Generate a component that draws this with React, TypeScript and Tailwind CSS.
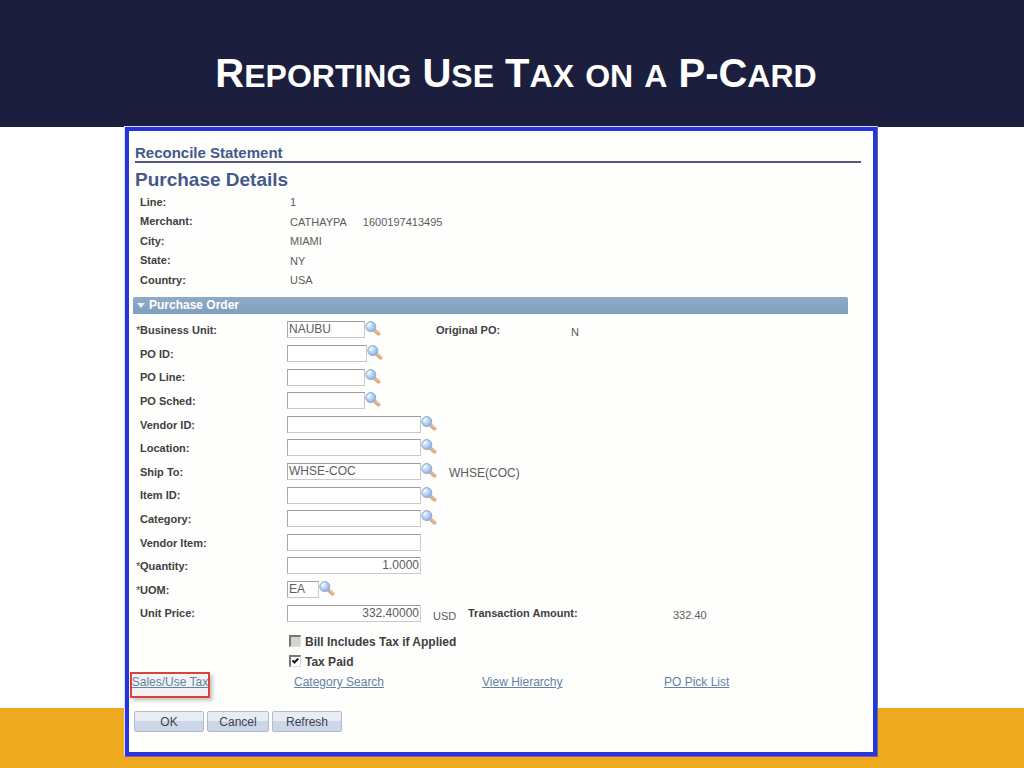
import React from "react";

interface FieldProps {
  id: string;
  label: string;
  required?: boolean;
  value?: string;
  width?: string;
  lookup?: boolean;
  children?: React.ReactNode;
}

const details = [
  { label: "Line:", values: ["1"] },
  { label: "Merchant:", values: ["CATHAYPA", "1600197413495"] },
  { label: "City:", values: ["MIAMI"] },
  { label: "State:", values: ["NY"] },
  { label: "Country:", values: ["USA"] },
];

const LookupIcon: React.FC = () => (
  <svg viewBox="0 0 16 16" className="h-4 w-4" aria-hidden="true">
    <defs>
      <radialGradient id="lens" cx="0.35" cy="0.35" r="0.75">
        <stop offset="0" stopColor="#e6f6ff" />
        <stop offset="0.55" stopColor="#a9cff6" />
        <stop offset="1" stopColor="#7da7e6" />
      </radialGradient>
    </defs>
    <path d="M9.6 9.2 13.8 12.9" stroke="#e2b98c" strokeWidth="3.6" strokeLinecap="round" />
    <path d="M9.6 10.8 13 13.9" stroke="#b99a80" strokeWidth="1" strokeLinecap="round" />
    <circle cx="5.8" cy="5.6" r="5" fill="url(#lens)" stroke="#98a9c0" strokeWidth="1" />
    <path d="M2.8 5.2A3.2 3.2 0 0 1 5.6 2.4" fill="none" stroke="#fff" strokeWidth="1" strokeLinecap="round" />
  </svg>
);

const Field: React.FC<FieldProps> = ({ id, label, required, value = "", width = "w-[134px]", lookup, children }) => (
  <div className="flex items-center">
    <label htmlFor={id} className="flex w-[151px] shrink-0 pt-px text-[11px] font-bold">
      <span className="w-1 font-normal">{required ? "*" : ""}</span>
      {label}
    </label>
    <input
      id={id}
      type="text"
      defaultValue={value}
      className={`h-[17px] border border-[#c9c9c9] border-t-[#9d9d9d] border-l-[#ababab] bg-white px-px pb-px text-xs leading-4 text-[#5c5c5c] outline-none ${width}`}
    />
    {lookup && (
      <button type="button" aria-label={`Look up ${label}`} className="shrink-0 pb-px">
        <LookupIcon />
      </button>
    )}
    {children}
  </div>
);

const CheckField: React.FC<{ id: string; label: string; checked?: boolean; disabled?: boolean }> = ({
  id,
  label,
  checked,
  disabled,
}) => (
  <div className="flex h-5 items-center">
    <span className="relative mr-1 h-3 w-3">
      <input
        id={id}
        type="checkbox"
        defaultChecked={checked}
        disabled={disabled}
        className="peer block h-3 w-3 appearance-none border-t-2 border-r border-b border-l-2 border-[#dedede] border-t-[#777] border-l-[#777] bg-white disabled:bg-[#d6d3ce]"
      />
      <svg viewBox="0 0 12 12" className="pointer-events-none absolute inset-0 hidden h-3 w-3 peer-checked:block">
        <path d="M3.5 5.3 5.5 7.5 9.2 3.6" fill="none" stroke="#111" strokeWidth="2" />
      </svg>
    </span>
    <label htmlFor={id} className="pt-0.5 text-xs font-bold">
      {label}
    </label>
  </div>
);

const ActionButton: React.FC<{ children: React.ReactNode; width: string }> = ({ children, width }) => (
  <button
    type="button"
    className={`h-[21px] rounded-[2px] border border-[#b3bac9] bg-linear-to-b from-[#e8edf5] from-50% to-[#ccd6e6] to-50% text-xs leading-4 text-[#3c4250] ${width}`}
  >
    {children}
  </button>
);

const linkClass = "text-xs leading-4 text-[#6283a3] underline";

const App: React.FC = () => {
  return (
    <div className="min-h-screen bg-white font-['Liberation_Sans',Arial,sans-serif] text-[#3f3f3f]">
      <header className="h-[127px] bg-[#1b1e3d] pt-[49px] pl-2">
        <h1 className="text-center text-[40px] leading-[48px] font-bold text-white">
          R<span className="text-[32px]">EPORTING</span> U<span className="text-[32px]">SE</span> T
          <span className="text-[32px]">AX</span> <span className="text-[32px]">ON</span>{" "}
          <span className="text-[32px]">A</span> P-C<span className="text-[32px]">ARD</span>
        </h1>
      </header>

      <main className="relative z-10 -mt-px ml-31 max-w-[754px] border border-[#dcdcfa] border-r-[#60708c] border-b-[#b23fae]">
        <div className="border-4 border-[#2736dc] bg-[#fefefd] px-1 pt-3.5 pb-5">
          {/* Page titles */}
          <h2 className="mr-2 ml-0.5 border-b-2 border-[#55567f] text-[15px] leading-4 font-bold text-[#44598a]">
            Reconcile Statement
          </h2>
          <h3 className="mt-[5px] ml-0.5 text-[19px] leading-6 font-bold text-[#44598a]">Purchase Details</h3>

          <dl className="grid min-h-[98px] auto-rows-fr pl-[7px] text-[11px]">
            {details.map((d) => (
              <div key={d.label} className="flex items-center">
                <dt className="w-[150px] font-bold">{d.label}</dt>
                <dd className="flex gap-4 pt-px text-[#5c5c5c]">
                  {d.values.map((v) => (
                    <span key={v}>{v}</span>
                  ))}
                </dd>
              </div>
            ))}
          </dl>

          {/* Section bar */}
          <div className="mt-[7px] mr-[21px] rounded-t-[2px] bg-linear-to-b from-[#8faac6] to-[#7f9fc0]">
            <button type="button" className="flex h-[17px] items-center pb-px pl-1 text-xs font-bold text-white">
              <svg viewBox="0 0 8 5" className="mr-1 h-[5px] w-2" aria-hidden="true">
                <path d="M0 0h8L4 5z" fill="#e4eef6" />
              </svg>
              Purchase Order
            </button>
          </div>

          <form onSubmit={(e) => e.preventDefault()}>
            <div className="mt-1 grid min-h-[307px] auto-rows-fr pl-[3px]">
              <Field id="business-unit" label="Business Unit:" required value="NAUBU" width="w-[78px]" lookup>
                <span className="ml-[55px] w-[135px] pt-px text-[11px] font-bold">Original PO:</span>
                <span className="pt-1 text-[11px] text-[#5c5c5c]">N</span>
              </Field>
              <Field id="po-id" label="PO ID:" width="w-20" lookup />
              <Field id="po-line" label="PO Line:" width="w-[78px]" lookup />
              <Field id="po-sched" label="PO Sched:" width="w-[78px]" lookup />
              <Field id="vendor-id" label="Vendor ID:" lookup />
              <Field id="location" label="Location:" lookup />
              <Field id="ship-to" label="Ship To:" value="WHSE-COC" lookup>
                <span className="ml-3 pt-1 text-xs text-[#5c5c5c]">WHSE(COC)</span>
              </Field>
              <Field id="item-id" label="Item ID:" lookup />
              <Field id="category" label="Category:" lookup />
              <Field id="vendor-item" label="Vendor Item:" />
              <Field id="quantity" label="Quantity:" required value="1.0000" width="w-[134px] text-right" />
              <Field id="uom" label="UOM:" required value="EA" width="w-8" lookup />
              <Field id="unit-price" label="Unit Price:" value="332.40000" width="w-[134px] text-right">
                <span className="ml-3 w-[35px] pt-1.5 text-[11px] text-[#5c5c5c]">USD</span>
                <span className="w-[205px] pt-px text-[11px] font-bold">Transaction Amount:</span>
                <span className="pt-1 text-[11px] text-[#5c5c5c]">332.40</span>
              </Field>
            </div>

            <div className="mt-1.5 pl-[156px]">
              <CheckField id="bill-includes-tax" label="Bill Includes Tax if Applied" disabled />
              <CheckField id="tax-paid" label="Tax Paid" checked />
            </div>

            {/* Related pages */}
            <nav className="mt-px grid grid-cols-[161px_188px_182px_auto] items-start">
              <div className="-ml-[3px] flex h-[26px] w-20 justify-center border-2 border-[#d8433c] bg-[#f3f3f6] shadow-[3px_3px_3px_#cccccc]">
                <a href="#sales-use-tax" className={`whitespace-nowrap ${linkClass}`}>Sales/Use Tax</a>
              </div>
              <a href="#category-search" className={`pt-0.5 ${linkClass}`}>Category Search</a>
              <a href="#view-hierarchy" className={`pt-0.5 ${linkClass}`}>View Hierarchy</a>
              <a href="#po-pick-list" className={`pt-0.5 ${linkClass}`}>PO Pick List</a>
            </nav>

            <div className="mt-[13px] flex gap-[3px] pl-px">
              <ActionButton width="w-[70px]">OK</ActionButton>
              <ActionButton width="w-[62px]">Cancel</ActionButton>
              <ActionButton width="w-[70px]">Refresh</ActionButton>
            </div>
          </form>
        </div>
      </main>

      <footer className="-mt-[49px] h-[60px] bg-[#eeaa1f]" />
    </div>
  );
};

export default App;
